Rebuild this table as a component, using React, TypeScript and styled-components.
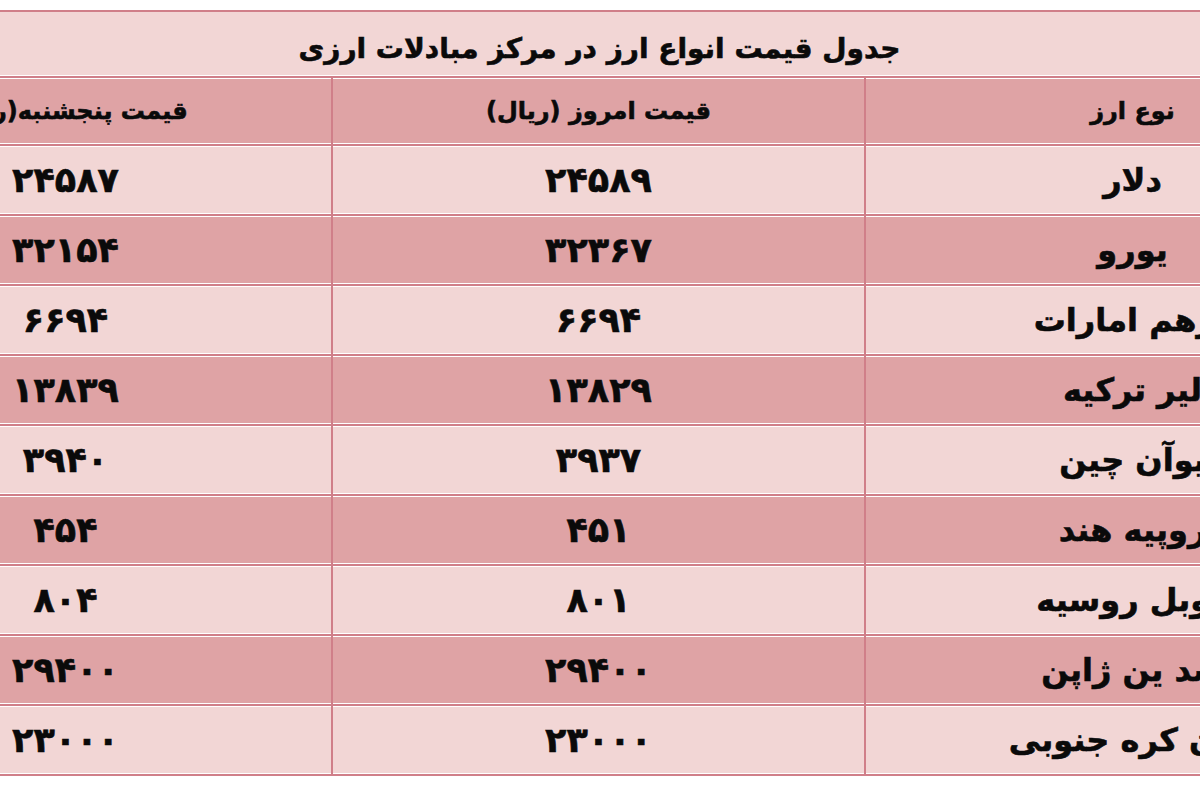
import React from 'react';
import styled, { createGlobalStyle } from 'styled-components';

const GlobalStyle = createGlobalStyle`
  html, body {
    margin: 0;
    padding: 0;
    background: #ffffff;
  }
  body {
    font-family: "DejaVu Sans", "Noto Sans", sans-serif;
  }
`;

const colors = {
  light: '#f2d6d5',
  dark: '#dfa3a5',
  line: '#d07f89',
  text: '#0a0a0a',
};

type Tone = 'light' | 'dark';

interface RowProps {
  tone: Tone;
  height: number;
}

const rates = [
  { name: 'دلار', today: '۲۴۵۸۹', thursday: '۲۴۵۸۷' },
  { name: 'یورو', today: '۳۲۳۶۷', thursday: '۳۲۱۵۴' },
  { name: 'درهم امارات', today: '۶۶۹۴', thursday: '۶۶۹۴' },
  { name: 'لیر ترکیه', today: '۱۳۸۲۹', thursday: '۱۳۸۳۹' },
  { name: 'یوآن چین', today: '۳۹۳۷', thursday: '۳۹۴۰' },
  { name: 'روپیه هند', today: '۴۵۱', thursday: '۴۵۴' },
  { name: 'روبل روسیه', today: '۸۰۱', thursday: '۸۰۴' },
  { name: 'صد ین ژاپن', today: '۲۹۴۰۰', thursday: '۲۹۴۰۰' },
  { name: 'وون کره جنوبی', today: '۲۳۰۰۰', thursday: '۲۳۰۰۰' },
];

const App = () => {
  return (
    <>
      <GlobalStyle />
      <Frame>
        <Table>
          <Title>جدول قیمت انواع ارز در مرکز مبادلات ارزی</Title>
          <Row tone="dark" height={66}>
            <HeadCell>نوع ارز</HeadCell>
            <HeadCell>قیمت امروز (ریال)</HeadCell>
            <HeadCell>قیمت پنجشنبه(ریال)</HeadCell>
          </Row>
          {rates.map((r, i) => (
            <Row key={r.name} tone={i % 2 === 0 ? 'light' : 'dark'} height={68}>
              <NameCell>{r.name}</NameCell>
              <NumberCell>{r.today}</NumberCell>
              <NumberCell>{r.thursday}</NumberCell>
            </Row>
          ))}
        </Table>
      </Frame>
    </>
  );
};

export default App;

const Frame = styled.div`
  width: 1200px;
  height: 800px;
  overflow: hidden;
  padding-top: 10px;
  box-sizing: border-box;
`;

const Table = styled.div`
  width: 1599px;
  margin-left: -200px;
  direction: rtl;
  border-top: 2px solid ${colors.line};
  color: ${colors.text};
`;

const Title = styled.div`
  height: 66px;
  box-sizing: border-box;
  padding-top: 8px;
  display: flex;
  align-items: center;
  justify-content: center;
  background: ${colors.light};
  border-bottom: 2px solid ${colors.line};
  box-shadow: inset 0 -1px 0 #ffffff;
  font-size: 28px;
  font-weight: 700;
  -webkit-text-stroke: 0.6px ${colors.text};
`;

const Row = styled.div<RowProps>`
  display: grid;
  grid-template-columns: repeat(3, 533px);
  height: ${({ height }) => height}px;
  background: ${({ tone }) => (tone === 'dark' ? colors.dark : colors.light)};
  border-bottom: 2px solid ${colors.line};
  box-shadow: inset 0 1px 0 #ffffff, inset 0 -1px 0 #ffffff;
`;

const Cell = styled.div`
  display: flex;
  align-items: center;
  justify-content: center;
  white-space: nowrap;
  font-weight: 700;
  -webkit-text-stroke: 0.6px ${colors.text};
  & + & {
    border-right: 2px solid ${colors.line};
  }
`;

const HeadCell = styled(Cell)`
  font-size: 24px;
`;

const NameCell = styled(Cell)`
  font-size: 32px;
`;

const NumberCell = styled(Cell)`
  font-size: 35px;
  letter-spacing: 1px;
`;
